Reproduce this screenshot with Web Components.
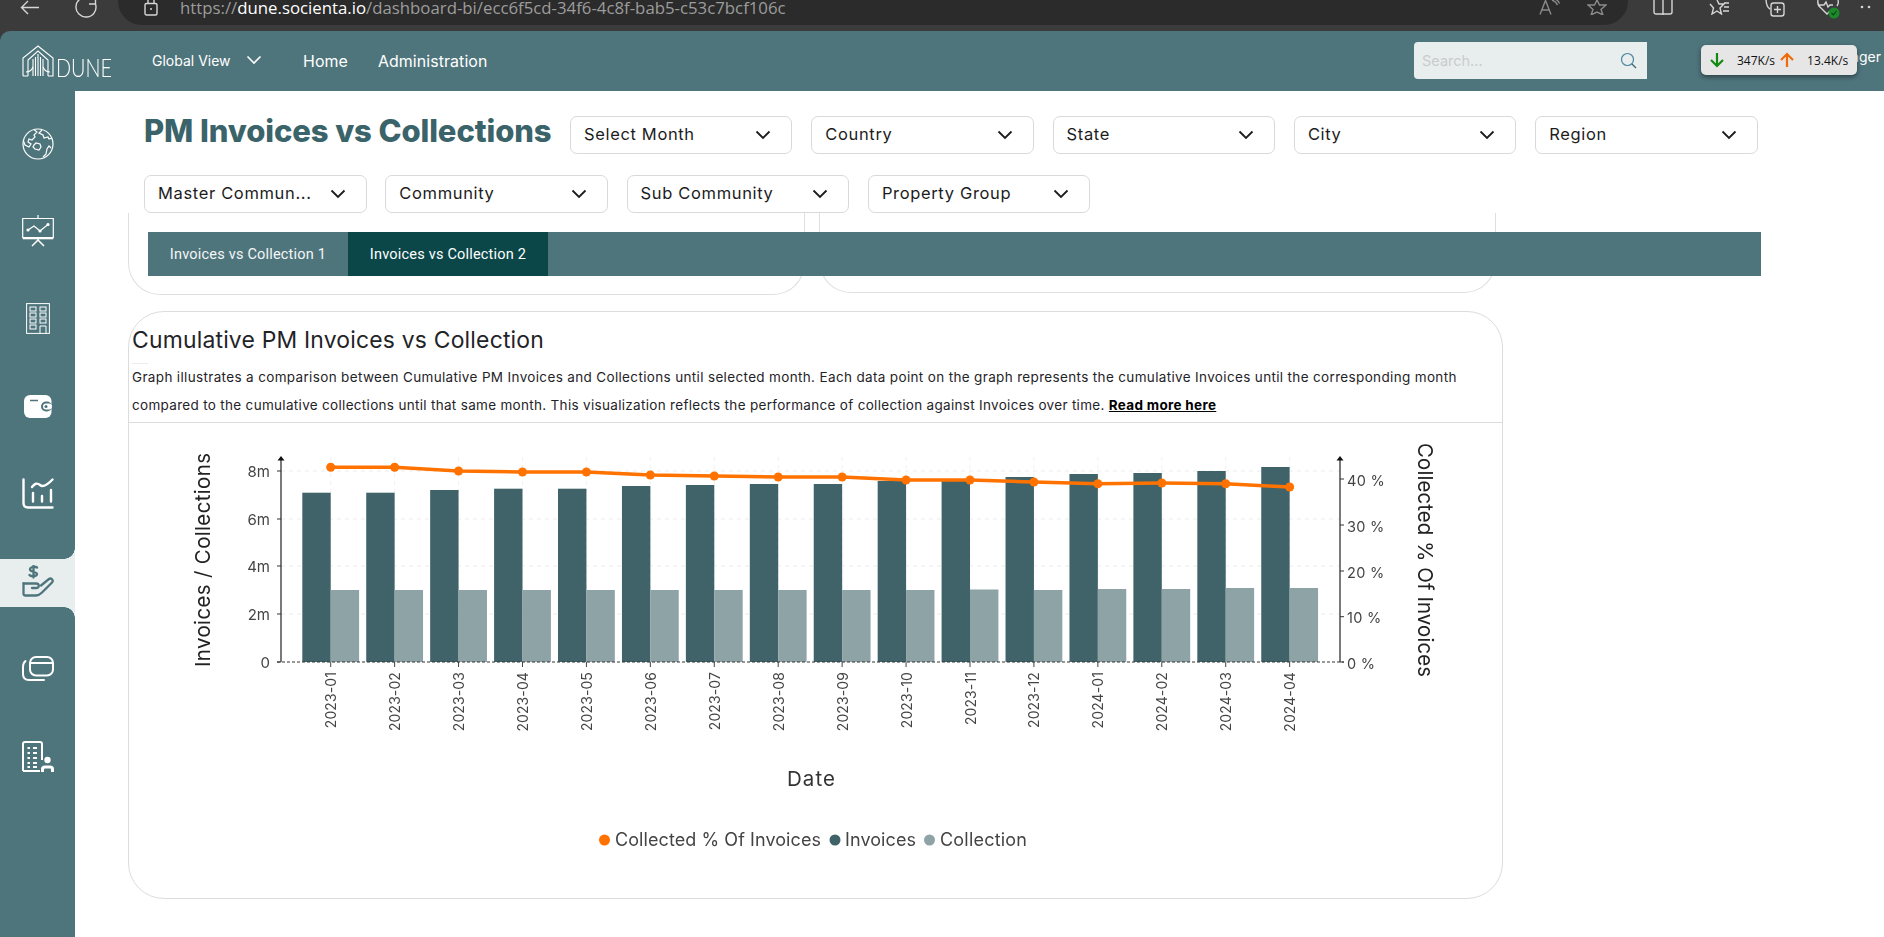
<!DOCTYPE html>
<html lang="en">
<head>
<meta charset="utf-8">
<title>PM Invoices vs Collections</title>
<style>
  html, body { margin: 0; height: 100%; background: #fff; overflow: hidden; }
  body { font-family: "Inter", "Liberation Sans", sans-serif; }
</style>
</head>
<body>
<dune-page></dune-page>
<script>
const colors = {
  teal: "#4f757c",
  tealDark: "#0b4749",
  title: "#3a636a",
  pale: "#e8eeee",
  invoices: "#3f6368",
  collection: "#8ea3a6",
  orange: "#ff7200",
};

const font = `"Inter", "Liberation Sans", sans-serif`;

// every component is just markup + styles in an open shadow root
class ShadowElement extends HTMLElement {
  constructor() {
    super();
    const template = document.createElement("template");
    template.innerHTML = this.getInnerHTML();
    this.attachShadow({ mode: "open" });
    this.shadowRoot.appendChild(template.content.cloneNode(true));
  }
  getInnerHTML() {
    return "";
  }
}

class BrowserBar extends ShadowElement {
  getInnerHTML() {
    return /*html*/ `
    <style>
      :host { display: flex; height: 31px; background: #3b3b3b; overflow: hidden; align-items: flex-start; color: #cfcfcf; }
      svg { display: block; fill: none; stroke: #d6d6d6; stroke-width: 1.4; flex: none; }
      .pill { width: 1510px; height: 25px; background: #2b2b2b; border-radius: 0 0 24px 24px; display: flex; align-items: flex-start; flex: none; margin-left: 21px; }
      .url { font: 400 16.800px/16px "Open Sans", "Liberation Sans", sans-serif; color: #9c9c9c; margin-left: 22px; white-space: nowrap; }
      .url b { font-weight: 400; color: #fff; }
      .spacer { flex: 1; }
    </style>
    <svg width="20" height="16" viewBox="0 0 20 16" style="margin-left:20px"><path d="M19 7.500H1.500M8 1L1.500 7.500 8 14"/></svg>
    <svg width="22" height="18" viewBox="0 0 22 18" style="margin-left:35px"><path d="M20.500 4A10 10 0 1 1 14 -2.500M20.500 -3V4H14"/></svg>
    <div class="pill">
      <svg width="14" height="16" viewBox="0 0 14 16" style="margin-left:26px"><rect x="1" y="3.500" width="12" height="11.500" rx="1.500"/><path d="M4 3.500V0M10 3.500V0"/><circle cx="7" cy="9" r="1" fill="#d6d6d6" stroke="none"/></svg>
      <div class="url">https://<b>dune.socienta.io</b>/dashboard-bi/ecc6f5cd-34f6-4c8f-bab5-c53c7bcf106c</div>
      <div class="spacer"></div>
      <svg width="22" height="15" viewBox="0 0 22 15" style="margin-right:26px;stroke:#8a8a8a"><path d="M1 14.500L6.500 0.500 12 14.500M3 10h7M13 0q4 1.500 5.500 5M16 -1q3 1 4.500 4.500"/></svg>
      <svg width="20" height="15" viewBox="0 0 20 15" style="margin-right:21px;stroke:#8a8a8a"><path d="M10 0L12.500 5H19L14 9.500 16 15 10 12 4 15 6 9.500 1 5H7.500Z"/></svg>
    </div>
    <svg width="20" height="15" viewBox="0 0 20 15" style="margin-left:25px"><rect x="1" y="-3" width="18" height="17" rx="2"/><path d="M10 -3V15"/></svg>
    <svg width="21" height="15" viewBox="0 0 21 15" style="margin-left:36px"><path d="M8 0L10 4H15L11 8 12.500 14 8 11 3 14 4.500 8 1 4M15 3h5M15 7h5M14 11h6"/></svg>
    <svg width="20" height="17" viewBox="0 0 20 17" style="margin-left:35px"><path d="M1 -2Q1 7 5 9"/><rect x="6" y="3" width="13" height="13" rx="2.500"/><path d="M12.500 6v7M9 9.500h7"/></svg>
    <svg width="26" height="20" viewBox="0 0 26 20" style="margin-left:31px"><path d="M2 0Q1 5 5 8L11 14 14 11M22 0Q23 3 21 6M3 5H8L10 2 12 7 14 5H17"/><circle cx="18" cy="13" r="5.500" fill="#1a8a2a" stroke="none"/><path d="M15.500 13l2 2 3-4" stroke="#0d3d12" stroke-width="1.100"/></svg>
    <svg width="24" height="14" viewBox="0 0 24 14" style="margin-left:11px"><circle cx="9" cy="7" r="1.300" fill="#d6d6d6" stroke="none"/><circle cx="16" cy="7" r="1.300" fill="#d6d6d6" stroke="none"/></svg>`;
  }
}

class DuneLogo extends ShadowElement {
  getInnerHTML() {
    return /*html*/ `
    <style>
      :host { display: flex; align-items: flex-end; color: #fff; height: 32px; }
      svg { display: block; fill: none; stroke: #fff; stroke-width: 1.100; flex: none; }
      span { font: 300 24.500px/20px "Lato", "Liberation Sans", sans-serif; margin-left: 2px; display: block; height: 19px; width: 56px; transform: scaleX(.81); transform-origin: 0 50%; }
    </style>
    <svg width="32" height="32" viewBox="0 0 32 32">
      <path d="M1 31V13L16 1 31 13V31H26M1 31H6"/>
      <path d="M6 31V15L16 6 26 15V31"/>
      <path d="M11 31V14M21 31V14M16 31V9M13.500 31V12M18.500 31V12"/>
      <path d="M4 27Q9 27 11 22M28 27Q23 27 21 22"/>
    </svg>
    <span>DUNE</span>`;
  }
}

class NetSpeed extends ShadowElement {
  getInnerHTML() {
    return /*html*/ `
    <style>
      :host { position: absolute; right: 27px; top: 14px; width: 156px; height: 30px; box-sizing: border-box; background: #e6e6e6; border-radius: 5px; box-shadow: 0 2px 5px rgba(0,0,0,.45); display: flex; align-items: center; font: 400 12px "Open Sans", "Liberation Sans", sans-serif; color: #111; }
      svg { display: block; fill: none; stroke-width: 2.200; flex: none; }
      span { white-space: nowrap; }
    </style>
    <svg width="14" height="16" viewBox="0 0 14 16" style="margin-left:9px;stroke:#128a12"><path d="M7 1V14M1 8L7 14 13 8"/></svg>
    <span style="margin-left:13px">347K/s</span>
    <svg width="14" height="16" viewBox="0 0 14 16" style="margin-left:5px;stroke:#f06a0a"><path d="M7 15V2M1 8L7 2 13 8"/></svg>
    <span style="margin-left:13px">13.4K/s</span>`;
  }
}

class DuneHeader extends ShadowElement {
  getInnerHTML() {
    return /*html*/ `
    <style>
      :host { display: flex; align-items: center; height: 60px; background: ${colors.teal}; color: #fff; position: relative; padding-left: 22px; font-family: ${font}; border-top-left-radius: 10px; }
      .global { display: flex; align-items: center; margin-left: 40px; font-size: 14px; margin-top: -2px; width: 151px; }
      .global svg { margin-left: 15px; }
      a { font-size: 15.900px; letter-spacing: .1px; color: #fff; margin-top: 1px; }
      .search { margin-left: auto; width: 233px; height: 37px; background: ${colors.pale}; border-radius: 4px 0 0 4px; display: flex; align-items: center; justify-content: space-between; padding: 0 10px 0 8px; box-sizing: border-box; font-size: 14.500px; color: #c9cccc; margin-top: -1px; }
      .user { width: 237px; text-align: right; padding-right: 3px; box-sizing: border-box; font-size: 14px; margin-top: -9px; white-space: nowrap; }
    </style>
    <dune-logo></dune-logo>
    <div class="global">Global View
      <svg width="16" height="10" viewBox="0 0 16 10" fill="none" stroke="#fff" stroke-width="1.600"><path d="M1.500 1.500L8 8l6.500-6.500"/></svg>
    </div>
    <a style="margin-right:30px">Home</a>
    <a>Administration</a>
    <div class="search">Search...
      <svg width="17" height="17" viewBox="0 0 17 17" fill="none" stroke="#4c86a0" stroke-width="1.200"><circle cx="7.500" cy="7.500" r="6"/><path d="M12 12l4 4" stroke="#3f6368"/></svg>
    </div>
    <div class="user">ager</div>
    <net-speed></net-speed>`;
  }
}

const icons = {
  globe: `<svg width="32" height="32" viewBox="0 0 32 32" fill="none" stroke="#fff" stroke-width="1.200"><circle cx="16" cy="16" r="15"/><path d="M12 1.500L15 4 12 7 13 9 10 12 7 11 6 14 9 16 7 19 3 17 1.500 13M20 2L17 5 21 7 22 10 26 9 27 11 30 10M29 20L27 18 25 21 24 26 21 29M12 17L14 15 18 16 19 19 17 22 13 21 11 19Z"/></svg>`,
  presentation: `<svg width="32" height="32" viewBox="0 0 32 32" fill="none" stroke="#fff" stroke-width="1.200"><path d="M16 0V3M.7 3.500H31.300V22.500H.7Z"/><path d="M6 15L12 11 18 16 26 9.500" stroke-width="1.300"/><circle cx="6" cy="15" r="1" fill="#fff"/><circle cx="18" cy="16" r="1" fill="#fff"/><circle cx="26" cy="9.500" r="1" fill="#fff"/><path d="M.7 23.500H31.300" stroke-width="1.600"/><path d="M10 31L16 25 22 31M16 23V25" stroke-width="1.500"/></svg>`,
  building: `<svg width="24" height="31" viewBox="0 0 24 31" fill="none" stroke="#fff" stroke-width="1"><rect x=".6" y=".6" width="22.800" height="29.800"/><rect x="4" y="4" width="6" height="4"/><rect x="14" y="4" width="6" height="4"/><rect x="4" y="10" width="6" height="4"/><rect x="14" y="10" width="6" height="4"/><rect x="4" y="16" width="6" height="4"/><rect x="14" y="16" width="6" height="4"/><rect x="4" y="22" width="6" height="4"/><path d="M14 30.500V23H20V30.500"/></svg>`,
  wallet: `<svg width="28" height="23" viewBox="0 0 28 23"><rect width="27.500" height="23" rx="6" fill="#fff"/><rect x="17" y="6.500" width="11" height="10" rx="5" fill="${colors.teal}"/><rect x="19" y="8.500" width="9" height="6" rx="3" fill="#fff"/><circle cx="22" cy="11.500" r="1.500" fill="${colors.teal}"/><path d="M6 5.500H14" stroke="${colors.teal}" stroke-width="1.500"/></svg>`,
  chart: `<svg width="32" height="31" viewBox="0 0 32 31" fill="none" stroke="#fff" stroke-width="2.400" stroke-linecap="round"><path d="M1.500 1.500V25Q1.500 29.500 6 29.500H30.500"/><path d="M11 15V23.500M20 18V23.500M29 12V23.500"/><path d="M10 9Q14 3.500 18 7T30.500 1.500"/></svg>`,
  hand: `<svg width="32" height="32" viewBox="0 0 32 32" fill="none" stroke="${colors.teal}" stroke-width="2.300" stroke-linecap="round" stroke-linejoin="round"><path d="M15 2.500C13 1 8 2 8 4.500S15 6.500 15 9 9 12 7.500 10M11.500 0V12.500"/><path d="M1.500 18.500H14C17.500 18.500 18 23 14 23H10"/><path d="M1.500 18.500V28.500Q1.500 30.500 3.500 30.500H14C17 30.500 18.500 29 20 27.500L30 17.500C32 15 29 12.500 27 14L19 20.500"/></svg>`,
  cards: `<svg width="32" height="25" viewBox="0 0 32 25" fill="none" stroke="#fff" stroke-width="2" stroke-linecap="round"><rect x="8" y="1" width="23" height="18.500" rx="6"/><path d="M8.500 7H30.500"/><path d="M3.500 5Q1 7 1 11V18Q1 24 7 24H22"/></svg>`,
  person: `<svg width="32" height="31" viewBox="0 0 32 31" fill="none" stroke="#fff" stroke-width="2"><path d="M1 30V3Q1 1 3 1H18Q20 1 20 3V19M1 30H18"/><path d="M5.500 7H8M11 7H15M5.500 12H8M11 12H15M5.500 17H8M11 17H15M5.500 22H8M11 22H15M5.500 26H8M11 26H15" stroke-width="2.200"/><circle cx="25.500" cy="19" r="3.200" fill="#fff" stroke="none"/><path d="M19 31V28Q19 24.500 23 24.500H28Q32 24.500 32 28V31H29V28.500Q29 27.500 28 27.500H23Q22 27.500 22 28.500V31Z" fill="#fff" stroke="none"/></svg>`,
};

class DuneSidebar extends ShadowElement {
  getInnerHTML() {
    const names = ["globe", "presentation", "building", "wallet", "chart", "hand", "cards", "person"];
    const items = names
      .map((n) => `<div class="item ${n === "hand" ? "active" : ""}"><div class="inner">${icons[n]}</div></div>`)
      .join("");
    return /*html*/ `
    <style>
      :host { display: flex; flex-direction: column; width: 75px; flex: none; background: ${colors.teal}; padding-top: 9px; box-sizing: border-box; }
      .item { height: 87.500px; display: flex; align-items: center; flex: none; }
      .inner { width: 75px; display: flex; justify-content: center; }
      .inner svg { display: block; }
      .active .inner { position: relative; height: 48px; background: ${colors.pale}; align-items: center; margin-top: 4px; }
      .active .inner svg { margin-top: -4px; }
      .active .inner::before, .active .inner::after { content: ""; position: absolute; right: 0; width: 11px; height: 11px; }
      .active .inner::before { top: -11px; background: radial-gradient(circle at 0 0, ${colors.teal} 10.500px, ${colors.pale} 11px); }
      .active .inner::after { bottom: -11px; background: radial-gradient(circle at 0 100%, ${colors.teal} 10.500px, ${colors.pale} 11px); }
    </style>
    ${items}`;
  }
}

class FilterSelect extends ShadowElement {
  getInnerHTML() {
    return /*html*/ `
    <style>
      :host { display: flex; align-items: center; justify-content: space-between; width: 222.500px; height: 38px; box-sizing: border-box; border: 1px solid #d9d9d9; border-radius: 7px; background: #fff; padding: 0 20px 2px 13px; font: 400 16.500px ${font}; letter-spacing: .65px; color: #1c1c1c; white-space: nowrap; }
      svg { flex: none; margin-top: 2px; }
    </style>
    <slot></slot>
    <svg width="16" height="10" viewBox="0 0 16 10" fill="none" stroke="#1c1c1c" stroke-width="1.800"><path d="M1.500 1.500L8 8l6.500-6.500"/></svg>`;
  }
}

class DuneFilters extends ShadowElement {
  getInnerHTML() {
    const names = ["Select Month", "Country", "State", "City", "Region", "Master Commun...", "Community", "Sub Community", "Property Group"];
    return /*html*/ `
    <style>
      :host { display: flex; flex-wrap: wrap; gap: 21px 18.800px; padding: 25px 0 0 69px; width: 1700px; box-sizing: border-box; }
      h1 { margin: 1px 0 0; width: 407.200px; height: 37px; font: 800 31px/28px ${font}; color: ${colors.title}; white-space: nowrap; letter-spacing: -.1px; }
    </style>
    <h1>PM Invoices vs Collections</h1>
    ${names.map((n) => `<filter-select>${n}</filter-select>`).join("")}`;
  }
}

class DuneTabs extends ShadowElement {
  getInnerHTML() {
    return /*html*/ `
    <style>
      :host { display: flex; height: 44px; background: ${colors.teal}; width: 1613px; margin: 19px 0 0 73px; grid-area: 1 / 1; font: 400 14.500px Roboto, "Liberation Sans", sans-serif; color: #f4f6f6; position: relative; }
      div { width: 200px; display: flex; align-items: center; justify-content: center; letter-spacing: .2px; }
      .on { background: ${colors.tealDark}; color: #fff; }
    </style>
    <div>Invoices vs Collection 1</div>
    <div class="on">Invoices vs Collection 2</div>`;
  }
}

class PreviousCards extends ShadowElement {
  getInnerHTML() {
    return /*html*/ `
    <style>
      :host { display: flex; gap: 14px; grid-area: 1 / 1; margin-left: 53px; height: 82px; }
      div { box-sizing: border-box; height: 100%; border: 1px solid #dfdfdf; border-top: 0; border-radius: 0 0 32px 32px; }
    </style>
    <div style="width:677px"></div>
    <div style="width:677px;height:80px"></div>`;
  }
}

class InvoicesChart extends ShadowElement {
  getInnerHTML() {
    const months = ["2023-01","2023-02","2023-03","2023-04","2023-05","2023-06","2023-07","2023-08","2023-09","2023-10","2023-11","2023-12","2024-01","2024-02","2024-03","2024-04"];
    const invoiceTops = [492.7,492.7,490,488.7,488.7,486,485,484,484,481,481,477,474,473,471,467];
    const collectionTops = [590,590,590,590,590,590,590,590,590,590,589.5,590,589,589,588,588];
    const lineYs = [467.3,467.3,471,472,472,475,476,477,477,480,480,482,483.7,483,483.7,487];
    const cx = (i) => 330.7 + i * 63.93;
    const base = 662;
    const bw = 28.4;
    const leftTicks = [[471,"8m"],[519,"6m"],[566,"4m"],[614,"2m"],[662,"0"]];
    const rightTicks = [[479,"40 %"],[525,"30 %"],[571,"20 %"],[616.7,"10 %"],[662,"0 %"]];

    let s = "";
    leftTicks.slice(0, 4).forEach(([y]) => {
      s += `<path d="M281 ${y}H1340" stroke="#ececec" stroke-dasharray="4 4"/>`;
    });
    months.forEach((m, i) => {
      s += `<path d="M${cx(i)} 457V${base}" stroke="#f1f1f1" stroke-dasharray="4 4"/>`;
    });
    months.forEach((m, i) => {
      const x = cx(i);
      s += `<rect x="${x - bw}" y="${invoiceTops[i]}" width="${bw}" height="${base - invoiceTops[i]}" fill="${colors.invoices}"/>`;
      s += `<rect x="${x}" y="${collectionTops[i]}" width="${bw}" height="${base - collectionTops[i]}" fill="${colors.collection}"/>`;
      s += `<path d="M${x} ${base}v5" stroke="#444"/>`;
      s += `<text x="${x}" y="672" text-anchor="end" dominant-baseline="central" transform="rotate(-90 ${x} 672)" font-size="14" letter-spacing=".1">${m}</text>`;
    });
    // axes
    s += `<path d="M277 ${base}H1344" stroke="#333" stroke-width="1" stroke-dasharray="3 2"/>`;
    s += `<path d="M281 459V${base}M1340 459V${base}" stroke="#333" stroke-width="1.300"/>`;
    s += `<path d="M281 456l-3.500 4.500h7ZM1340 456l-3.500 4.500h7Z" fill="#111"/>`;
    leftTicks.forEach(([y, t]) => {
      s += `<path d="M277 ${y}h4" stroke="#333"/><text x="270" y="${y}" text-anchor="end" dominant-baseline="central" font-size="15">${t}</text>`;
    });
    rightTicks.forEach(([y, t]) => {
      s += `<path d="M1340 ${y}h4" stroke="#333"/><text x="1347" y="${y + 1}" dominant-baseline="central" font-size="14.500" letter-spacing=".3">${t}</text>`;
    });
    // orange line
    const pts = lineYs.map((y, i) => `${cx(i)},${y}`).join(" ");
    s += `<polyline points="${pts}" fill="none" stroke="${colors.orange}" stroke-width="3.500"/>`;
    lineYs.forEach((y, i) => {
      s += `<circle cx="${cx(i)}" cy="${y}" r="4.500" fill="${colors.orange}"/>`;
    });
    // titles
    s += `<text x="202" y="560" text-anchor="middle" dominant-baseline="central" transform="rotate(-90 202 560)" font-size="20.500" textLength="214" fill="#222">Invoices / Collections</text>`;
    s += `<text x="1425" y="560" text-anchor="middle" dominant-baseline="central" transform="rotate(90 1425 560)" font-size="20.500" textLength="234" fill="#222">Collected % Of Invoices</text>`;
    s += `<text x="811" y="778" text-anchor="middle" dominant-baseline="central" font-size="20.500" textLength="48" fill="#333">Date</text>`;
    // legend
    s += `<circle cx="604.500" cy="840" r="5.500" fill="${colors.orange}"/><text x="615" y="839" dominant-baseline="central" font-size="18" textLength="206">Collected % Of Invoices</text>`;
    s += `<circle cx="835" cy="840" r="5.500" fill="${colors.invoices}"/><text x="845" y="839" dominant-baseline="central" font-size="18" textLength="71">Invoices</text>`;
    s += `<circle cx="929.500" cy="840" r="5.500" fill="${colors.collection}"/><text x="940" y="839" dominant-baseline="central" font-size="18" textLength="87">Collection</text>`;

    return /*html*/ `
    <style>
      :host { display: block; height: 476px; }
      svg { display: block; width: 1373px; height: 476px; font-family: ${font}; fill: #444; filter: blur(.3px); }
    </style>
    <svg viewBox="129 423 1373 476">${s}</svg>`;
  }
}

class ChartCard extends ShadowElement {
  getInnerHTML() {
    return /*html*/ `
    <style>
      :host { display: block; box-sizing: border-box; width: 1375px; height: 588px; margin: 16px 0 0 53px; border: 1px solid #dcdcdc; border-radius: 36px; font-family: ${font}; color: #1f2428; overflow: hidden; }
      header { padding: 13px 3px 0; height: 111px; box-sizing: border-box; border-bottom: 1px solid #dcdcdc; }
      h2 { margin: 0; font: 400 22.900px/30px ${font}; letter-spacing: .2px; white-space: nowrap; }
      .rule { width: 16px; height: 1px; background: ${colors.pale}; margin: 8px 0 0; }
      p { margin: 0; font-size: 13.500px; line-height: 27.600px; white-space: nowrap; letter-spacing: .345px; }
      span { letter-spacing: .31px; }
      a { color: #000; font-weight: 700; text-decoration: underline; }
    </style>
    <header>
      <h2>Cumulative PM Invoices vs Collection</h2>
      <div class="rule"></div>
      <p>Graph illustrates a comparison between Cumulative PM Invoices and Collections until selected month. Each data point on the graph represents the cumulative Invoices until the corresponding month<br><span>compared to the cumulative collections until that same month. This visualization reflects the performance of collection against Invoices over time. <a>Read more here</a></span></p>
    </header>
    <slot></slot>`;
  }
}

class DunePage extends ShadowElement {
  getInnerHTML() {
    return /*html*/ `
    <style>
      :host { display: flex; flex-direction: column; height: 937px; width: 1884px; overflow: hidden; background: #3b3b3b; }
      .body { display: flex; flex: 1; min-height: 0; background: ${colors.teal}; }
      main { flex: 1; background: #fff; min-width: 0; }
      .stack { display: grid; }
    </style>
    <browser-bar></browser-bar>
    <dune-header></dune-header>
    <div class="body">
      <dune-sidebar></dune-sidebar>
      <main>
        <dune-filters></dune-filters>
        <div class="stack">
          <previous-cards></previous-cards>
          <dune-tabs></dune-tabs>
        </div>
        <chart-card><invoices-chart></invoices-chart></chart-card>
      </main>
    </div>`;
  }
}

customElements.define("browser-bar", BrowserBar);
customElements.define("dune-logo", DuneLogo);
customElements.define("net-speed", NetSpeed);
customElements.define("dune-header", DuneHeader);
customElements.define("dune-sidebar", DuneSidebar);
customElements.define("filter-select", FilterSelect);
customElements.define("dune-filters", DuneFilters);
customElements.define("dune-tabs", DuneTabs);
customElements.define("previous-cards", PreviousCards);
customElements.define("invoices-chart", InvoicesChart);
customElements.define("chart-card", ChartCard);
customElements.define("dune-page", DunePage);
</script>
</body>
</html>
